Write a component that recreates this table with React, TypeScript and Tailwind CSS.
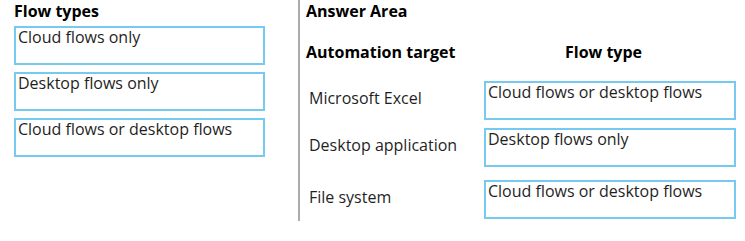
export default function App() {
  const flowTypes = ['Cloud flows only', 'Desktop flows only', 'Cloud flows or desktop flows'];
  const answers = [
    { target: 'Microsoft Excel', flow: 'Cloud flows or desktop flows', mt: 'mt-0' },
    { target: 'Desktop application', flow: 'Desktop flows only', mt: 'mt-[8px]' },
    { target: 'File system', flow: 'Cloud flows or desktop flows', mt: 'mt-[13px]' },
  ];

  return (
    <div className="flex h-[241px] w-[745px] bg-white pl-[14px] font-['Open_Sans',sans-serif] text-[#1f1f1f]">
      <div className="flex w-[251px] flex-col">
        <h2 className="h-[26px] text-[16px] leading-[22px] font-bold text-black">Flow types</h2>
        <div className="flex flex-col gap-[7px]">
          {flowTypes.map((t) => (
            <div key={t} className="h-[39px] border-2 border-[#76caf2] px-[2px] text-[16px] leading-[19px]">
              {t}
            </div>
          ))}
        </div>
      </div>

      <div className="ml-[33px] h-[221px] w-[2px] bg-[#ababab]" />

      <div className="flex flex-col pl-[6px]">
        <h2 className="text-[16px] leading-[22px] font-bold text-black">Answer Area</h2>
        <div className="mt-[19px] flex">
          <div className="w-[178px] text-[16px] leading-[22px] font-bold text-black">Automation target</div>
          <div className="w-[252px] pr-[13px] text-center text-[16px] leading-[22px] font-bold text-black">Flow type</div>
        </div>
        <div className="mt-[18px] flex flex-col">
          {answers.map((a) => (
            <div key={a.target} className={`flex items-center ${a.mt}`}>
              <div className="w-[178px] pb-[6px] pl-[3px] text-[16px] leading-[22px]">{a.target}</div>
              <div className="h-[39px] w-[252px] border-2 border-[#76caf2] px-[2px] text-[16px] leading-[19px]">
                {a.flow}
              </div>
            </div>
          ))}
        </div>
      </div>
    </div>
  );
}
